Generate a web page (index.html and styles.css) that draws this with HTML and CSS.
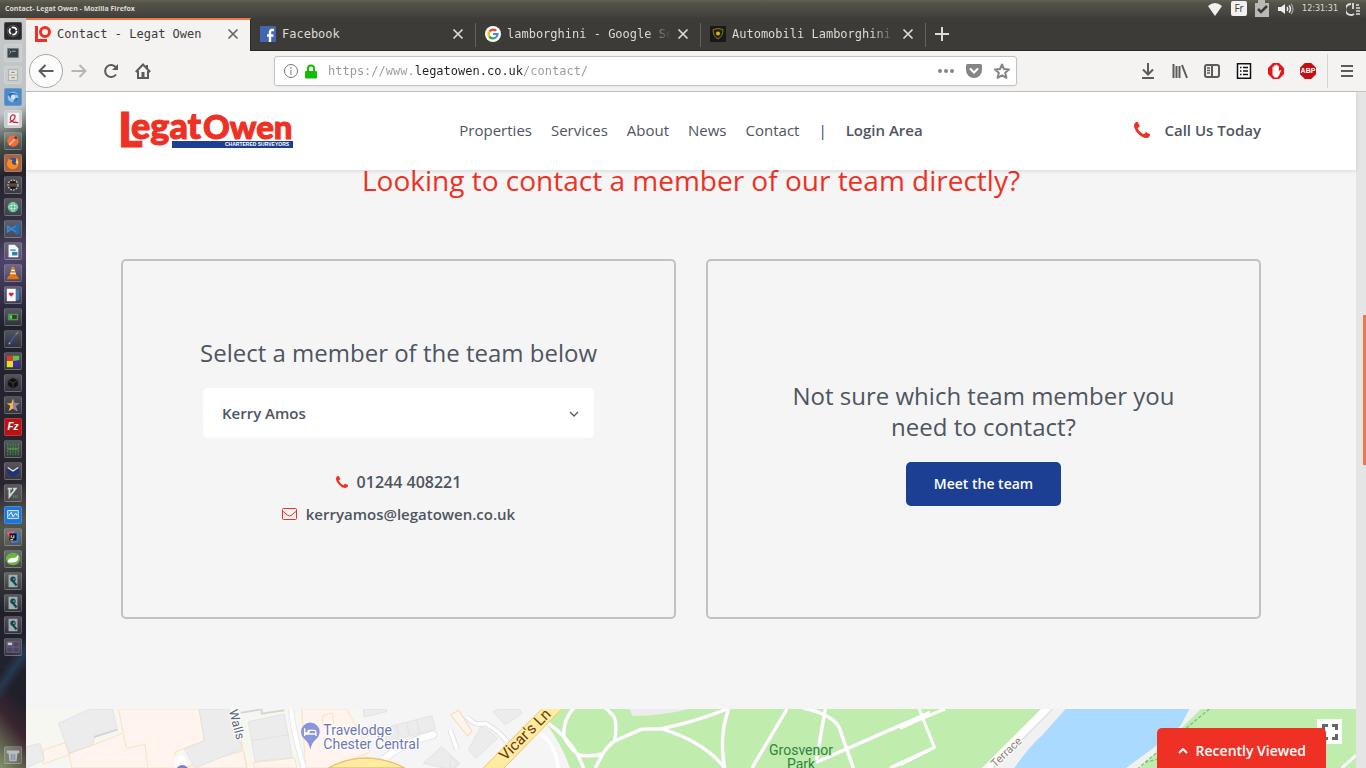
FILE: index.html
```html
<!DOCTYPE html>
<html lang="en">
<head>
<meta charset="utf-8">
<title>Contact - Legat Owen</title>
<link rel="stylesheet" href="styles.css">
</head>
<body>
<svg width="0" height="0" class="defs" aria-hidden="true">
  <symbol id="phone" viewBox="0 128 1408 1408"><path d="M1408 1240q0 27-10 70.500t-21 68.500q-21 50-122 106-94 51-186 51-27 0-53-3.500t-57-12.500-47-14.500-55.500-20.500-49-18q-98-35-175-83-127-79-264-216t-216-264q-48-77-83-175-3-9-18-49t-20.500-55.500-14.500-47-12.500-57-3.500-53q0-92 51-186 56-101 106-122 25-11 68.500-21t70.500-10q14 0 21 3 18 6 53 76 11 19 30 54t35 63.500 31 53.500q3 4 17.500 25t21.500 35.500 7 28.500q0 20-28.500 50t-62 55-62 53-28.500 46q0 9 5 22.500t8.500 20.500 14 24 11.500 19q76 137 174 235t235 174q2 1 19 11.500t24 14 20.500 8.500 22.500 5q18 0 46-28.500t53-62 55-62 50-28.500q14 0 28.500 7t35.500 21.500 25 17.500q25 15 53.500 31t63.500 35 54 30q70 35 76 53 3 7 3 21z"/></symbol>
  <symbol id="close" viewBox="0 0 12 12"><path d="M1.500 1.500l9 9M10.500 1.500l-9 9" fill="none" stroke="currentColor" stroke-width="1.700"/></symbol>
  <symbol id="ssh" viewBox="0 0 18 18"><path fill="#9fb0b2" d="M4 2h10v14H4z"/><circle cx="9" cy="7" r="3" fill="#17464f"/><path d="M9 9l4 5" stroke="#17464f" stroke-width="2.500"/><circle cx="10" cy="7" r="1" fill="#6aa0a8"/></symbol>
</svg>

<div class="titlebar">
  <span class="window-title">Contact- Legat Owen - Mozilla Firefox</span>
  <div class="indicators">
    <svg width="16" height="16" viewBox="0 0 16 16"><path fill="#f1f0ee" d="M1 5Q8-1 15 5L8 15z"/></svg>
    <span class="keyboard">Fr</span>
    <svg width="14" height="17" viewBox="0 0 14 17"><path fill="#b9b8b4" d="M0 3h3V0h7v3h4v14H0z"/><path d="M3 9l3 3 6-6" fill="none" stroke="#3c3b37" stroke-width="2.500"/></svg>
    <svg width="17" height="14" viewBox="0 0 17 14"><path fill="#eee" d="M1 5h3l4-3v10L4 9H1z"/><path d="M10 5q1.500 2 0 4M12 3.500q3 3.500 0 7" fill="none" stroke="#eee" stroke-width="1.500"/><path d="M14 2q4 5 0 10" fill="none" stroke="#98978f" stroke-width="1.500"/></svg>
    <span class="clock">12:31:31</span>
    <svg width="15" height="14" viewBox="0 0 15 14"><path d="M5 2a5.500 5.500 0 1 0 3 10M7 1v6" fill="none" stroke="#ddd" stroke-width="1.800"/><path d="M10 3h3M10 6h4M10 9h4M10 12h4" stroke="#ddd" stroke-width="1.500"/></svg>
  </div>
</div>

<div class="desktop">
<nav class="launcher" aria-label="Applications">
  <button aria-label="Dash" class="dark"><svg viewBox="0 0 18 18"><circle cx="9" cy="9" r="4" fill="none" stroke="#fff" stroke-width="2" stroke-dasharray="7 1.380"/><circle cx="9" cy="9" r="6.500" fill="none" stroke="#777" stroke-width=".6"/></svg></button>
  <button aria-label="Terminal" class="light"><svg viewBox="0 0 18 18"><path fill="#354142" stroke="#778" d="M3 4h12v10H3z"/><path d="M5 6l2 2-2 2M8 7h4" stroke="#dde" fill="none" stroke-width=".8"/></svg></button>
  <button aria-label="Files" class="light"><svg viewBox="0 0 18 18"><path fill="#e4e3dc" stroke="#aaa9a2" d="M4 3h10v12H4zM4 9h10"/><path d="M7 6h4M7 12h4" stroke="#777"/></svg></button>
  <button aria-label="Chromium" class="blue"><svg viewBox="0 0 18 18"><circle cx="9" cy="9" r="6" fill="#9cc5e8"/><path fill="#2e6fae" d="M3 6q5-4 12 1l-6-1-2 5zM9 15l3-5 3 0q-1 4-6 5z"/><circle cx="9" cy="9" r="2.500" fill="#cfe4f5"/></svg></button>
  <button aria-label="PDF viewer" class="light"><svg viewBox="0 0 18 18"><path fill="#f7f7f7" d="M3 2h13v14H3z"/><path d="M5 13q8-4 6-8-4-2-5 3t9 5" stroke="#cf2639" fill="none" stroke-width="1.500"/></svg></button>
  <button aria-label="Postman"><svg viewBox="0 0 18 18"><circle cx="9" cy="9" r="6.500" fill="#f26b3a"/><path d="M5 13l7-7" stroke="#fff" stroke-width="1.200"/><circle cx="12" cy="5.500" r="1.500" fill="#5b3124"/></svg></button>
  <button aria-label="Firefox" class="orange"><svg viewBox="0 0 18 18"><circle cx="9" cy="9" r="6" fill="#2b4fa2"/><path fill="#ff8a1c" d="M4 4q2 2 5 1-3 4 1 6 4 1 5-5 2 8-5 10-7 0-8-6z"/><path fill="#ffd13b" d="M13 3q3 4 1 8l-2-2z"/></svg></button>
  <button aria-label="Eclipse"><svg viewBox="0 0 18 18"><circle cx="9" cy="9" r="5.500" fill="#1b1a1e" stroke="#c8c4bd" stroke-width="1.500" stroke-dasharray="2 1.200"/><path d="M4 8h10M4 10h10" stroke="#9b7146"/></svg></button>
  <button aria-label="Atom"><svg viewBox="0 0 18 18"><circle cx="9" cy="9" r="6" fill="#56b98c"/><ellipse cx="9" cy="9" rx="5" ry="2" fill="none" stroke="#d7f2e4" stroke-width=".8"/><ellipse cx="9" cy="9" rx="2" ry="5" fill="none" stroke="#d7f2e4" stroke-width=".8"/></svg></button>
  <button aria-label="Code"><svg viewBox="0 0 18 18"><path d="M3 6l10 7V5L3 12z" fill="none" stroke="#2f8bd3" stroke-width="2"/><path fill="#1d6fb5" d="M12 2l4 2v10l-4 2z"/></svg></button>
  <button aria-label="Writer"><svg viewBox="0 0 18 18"><path fill="#f2f7fa" d="M4 2h7l4 4v10H4z"/><path d="M6 8h6" stroke="#3987b0" stroke-width="1.500"/><path fill="#2f7ea8" d="M8 10h6v4H8z"/></svg></button>
  <button aria-label="VLC"><svg viewBox="0 0 18 18"><path fill="#f0861d" d="M8 2h2l3 10H5z"/><path d="M7 6h4M6 9.500h6" stroke="#fff" stroke-width="1.500"/><path fill="#e6720d" d="M4 12h10l2 4H2z"/></svg></button>
  <button aria-label="Solitaire"><svg viewBox="0 0 18 18"><path fill="#4478ae" d="M11 3h5v12h-5z"/><path fill="#fff" d="M2 2h10v14H2z"/><path fill="#e2232d" d="M7 11L4 8q1-3 3-1 2-2 3 1z"/></svg></button>
  <button aria-label="Monitor"><svg viewBox="0 0 18 18"><path fill="#28452a" stroke="#4d9a48" stroke-width="1.500" d="M4 6h10v6H4z"/><path fill="#71c965" d="M5 7h3v4H5z"/></svg></button>
  <button aria-label="Paint"><svg viewBox="0 0 18 18"><path d="M5 14l7-10" stroke="#3762b5" stroke-width="1.500"/><path d="M12 4l3-3" stroke="#8b7568" stroke-width="2"/><circle cx="5" cy="14" r="1" fill="#5fd0ee"/></svg></button>
  <button aria-label="Blocks"><svg viewBox="0 0 18 18"><path fill="#dc3a2f" d="M2 3h7v6H2z"/><path fill="#61c542" d="M9 3h7v5l-7 1z"/><path fill="#e5df2c" d="M2 9h7v7H2z"/><path fill="#4126b4" d="M9 9h7v6H9z"/></svg></button>
  <button aria-label="Cube"><svg viewBox="0 0 18 18"><path fill="#111" stroke="#3d403d" d="M9 3l6 3v6l-6 4-6-4V6z"/><path d="M3 6l6 3 6-3M9 9v7" stroke="#444" fill="none"/></svg></button>
  <button aria-label="Star"><svg viewBox="0 0 18 18"><path fill="#f3bd35" d="M9 2l2 5h5l-4 3 2 6-5-3-5 3 2-6-4-3h5z"/><path fill="#9579b8" d="M9 2l2 5h5l-4 3 2 6-5-3z"/></svg></button>
  <button aria-label="FileZilla" class="red"><span>Fz</span></button>
  <button aria-label="Matrix"><svg viewBox="0 0 18 18"><path d="M3 2v14M6 3v13M9 2v14M12 3v13M15 2v14" stroke="#348b3c" stroke-width="1.500" stroke-dasharray="3 1"/><path d="M3 9h12" stroke="#76a961"/></svg></button>
  <button aria-label="Book"><svg viewBox="0 0 18 18"><path fill="#1b347a" d="M2 5l7 4 7-4v6l-7 5-7-5z"/><path d="M3 5l6 4 6-4" stroke="#e9e9e9" stroke-width="1.500" fill="none"/></svg></button>
  <button aria-label="Vim"><svg viewBox="0 0 18 18"><path d="M3 4h5M5 4v9l7-9h-3" stroke="#d0d8d3" stroke-width="2" fill="none"/><path d="M9 13h6" stroke="#4d9b6a" stroke-width="3" stroke-dasharray="1 1"/></svg></button>
  <button aria-label="System monitor" class="azure"><svg viewBox="0 0 18 18"><path fill="#3b91ea" stroke="#e9f4ff" d="M3 4h12v9H3z"/><path d="M4 10l3-4 2 5 3-4 2 3" stroke="#fff" fill="none"/></svg></button>
  <button aria-label="IntelliJ"><svg viewBox="0 0 18 18"><path fill="#f0568a" d="M2 4l8-2 5 8-7 6z"/><path fill="#2f7fe6" d="M10 3l6 3-1 9-7 1z"/><path fill="#151515" d="M5 5h8v8H5z"/><path d="M7 7v3M10 7v3H8M6 12h3" stroke="#fff" fill="none"/></svg></button>
  <button aria-label="Spring"><svg viewBox="0 0 18 18"><ellipse cx="9" cy="9" rx="8" ry="7" fill="#6db33f"/><path fill="#fff" d="M3 13q0-5 6-5 4 0 6-4 1 9-6 9z"/></svg></button>
  <button aria-label="Remote host 1"><svg><use href="#ssh"/></svg></button>
  <button aria-label="Remote host 2"><svg><use href="#ssh"/></svg></button>
  <button aria-label="Remote host 3"><svg><use href="#ssh"/></svg></button>
  <button aria-label="Workspaces"><svg viewBox="0 0 18 18"><path fill="#4d4662" stroke="#817b91" stroke-width=".6" d="M2 3h14v12H2zM9 3v12M2 9h14"/><path fill="#d6c8cf" d="M3 4h5v3H3z"/></svg></button>
  <button aria-label="Trash" class="trash"><svg viewBox="0 0 18 18"><path fill="#b7bfc6" d="M2 4h14v3H2zM4 7h10l-1 9H5z"/><path d="M7 8v7M9 8v7M11 8v7" stroke="#7b858e"/></svg></button>
</nav>

<div class="browser">
  <div class="tabs" role="tablist">
    <div class="tab active" role="tab" aria-selected="true">
      <svg width="16" height="16" viewBox="0 0 16 16"><path d="M1.500 0v14.500H12" fill="none" stroke="#ee3124" stroke-width="3"/><circle cx="10" cy="6" r="4.500" fill="none" stroke="#ee3124" stroke-width="3"/></svg>
      <span class="tab-title">Contact - Legat Owen</span>
      <button aria-label="Close tab"><svg width="12" height="12"><use href="#close"/></svg></button>
    </div>
    <div class="tab" role="tab">
      <svg width="16" height="16" viewBox="0 0 16 16"><rect width="16" height="16" rx="1" fill="#4267b2"/><path d="M10 16V6q0-2 2-2h2M7 9.500h6.500" fill="none" stroke="#fff" stroke-width="2.400"/></svg>
      <span class="tab-title">Facebook</span>
      <button aria-label="Close tab"><svg width="12" height="12"><use href="#close"/></svg></button>
    </div>
    <div class="tab" role="tab">
      <svg width="16" height="16" viewBox="0 0 16 16"><circle cx="8" cy="8" r="8" fill="#fff"/><g fill="none" stroke-width="2.200"><path stroke="#ea4335" d="M4.500 5.500A4.500 4.500 0 0 1 11.200 4.700"/><path stroke="#fbbc05" d="M4.300 10.500a4.500 4.500 0 0 1 .2-5"/><path stroke="#34a853" d="M11 11.300a4.500 4.500 0 0 1-6.700-.8"/><path stroke="#4285f4" d="M8 8h4.500a4.500 4.500 0 0 1-1.500 3.300"/></g></svg>
      <span class="tab-title faded">lamborghini - Google Sea</span>
      <button aria-label="Close tab"><svg width="12" height="12"><use href="#close"/></svg></button>
    </div>
    <div class="tab" role="tab">
      <svg width="16" height="16" viewBox="0 0 16 16"><path fill="#191919" d="M0 0h16v16H0z"/><path fill="#26220e" stroke="#8b7420" d="M3 3.500q5-2 10 0 0 7-5 9.500-5-2.500-5-9.500z"/><circle cx="8" cy="7.500" r="2" fill="#e0ae1c"/></svg>
      <span class="tab-title faded">Automobili Lamborghini -</span>
      <button aria-label="Close tab"><svg width="12" height="12"><use href="#close"/></svg></button>
    </div>
    <button class="new-tab" aria-label="New tab"><svg width="14" height="14" viewBox="0 0 14 14"><path d="M7 0v14M0 7h14" stroke="currentColor" stroke-width="2"/></svg></button>
  </div>

  <div class="toolbar">
    <button class="back" aria-label="Back"><svg width="16" height="16" viewBox="0 0 16 16"><path d="M15.500 8H1.500M7.500 2l-6 6 6 6"/></svg></button>
    <button class="tool disabled" aria-label="Forward"><svg width="16" height="16" viewBox="0 0 16 16"><path d="M.5 8h14M8.500 2l6 6-6 6"/></svg></button>
    <button class="tool" aria-label="Reload"><svg width="16" height="16" viewBox="0 0 16 16"><path d="M13 11.500a6 6 0 1 1 0-7"/><path d="M15 1v6H9z" class="solid"/></svg></button>
    <button class="tool" aria-label="Home"><svg width="16" height="16" viewBox="0 0 16 16"><path d="M.8 9L8 1.500 15.200 9M3 8v7h10V8M12 5V2"/><path d="M6.500 9h3v6h-3z" class="solid"/></svg></button>
    <div class="urlbar">
      <svg width="16" height="16" viewBox="0 0 16 16" class="info"><circle cx="8" cy="8" r="6.500"/><path d="M8 7v5M8 4v2"/></svg>
      <svg width="14" height="15" viewBox="0 0 14 15"><path d="M4 7V4.500a3 3 0 0 1 6 0V7" fill="none" stroke="#12bc00" stroke-width="2"/><rect x="1" y="7" width="12" height="7.500" rx="1" fill="#12bc00"/></svg>
      <input type="text" aria-label="Address" value="https://www.legatowen.co.uk/contact/">
      <button aria-label="Page actions"><svg width="16" height="16" viewBox="0 0 16 16" class="grey"><circle cx="2" cy="8" r="2"/><circle cx="8" cy="8" r="2"/><circle cx="14" cy="8" r="2"/></svg></button>
      <button aria-label="Save to Pocket"><svg width="16" height="16" viewBox="0 0 16 16" class="grey"><path d="M1.500 1h13Q16 1 16 2.500V7A8 8 0 0 1 0 7V2.500Q0 1 1.500 1z"/><path d="M4.500 6L8 9.500 11.500 6" fill="none" stroke="#fff" stroke-width="2" stroke-linecap="round"/></svg></button>
      <button aria-label="Bookmark"><svg width="16" height="16" viewBox="0 0 16 16"><path d="M8 1.500l2 4.500 5 .5-3.800 3.300 1.200 5L8 12.300l-4.400 2.500 1.200-5L1 6.500 6 6z" fill="none" stroke="#858585" stroke-width="1.700" stroke-linejoin="round"/></svg></button>
    </div>
    <button class="tool" aria-label="Downloads"><svg width="16" height="16" viewBox="0 0 16 16"><path d="M8 0v11M3 6.500l5 5 5-5M2 15h12"/></svg></button>
    <button class="tool" aria-label="Library"><svg width="16" height="16" viewBox="0 0 16 16"><path d="M1.500 1v14M4.500 3v12M7.500 3v12M10 2l5 13"/></svg></button>
    <button class="tool" aria-label="Sidebars"><svg width="16" height="16" viewBox="0 0 16 16"><rect x="1" y="2" width="14" height="12" rx="2"/><path d="M8 2v12"/><path class="thin" d="M3 5h3M3 7.500h3M3 10h3"/></svg></button>
    <button class="tool" aria-label="Reading list"><svg width="16" height="16" viewBox="0 0 16 16" class="black"><path class="thin" d="M1.500.8h13v14.400h-13z" fill="#fff"/><path class="thin" d="M4 4.500h1.500M7 4.500h5M4 8h1.500M7 8h5M4 11.500h1.500M7 11.500h5"/></svg></button>
    <button class="tool" aria-label="Ad blocker"><svg width="16" height="16" viewBox="0 0 16 16"><path class="plain" fill="#e8141b" d="M5 0h6l5 5v6l-5 5H5l-5-5V5z"/><path class="plain" fill="#fff" d="M4.500 4q.8-.8 1.500 0V2.800q.8-1 1.600 0V2q.8-1 1.600 0v1q.8-1 1.600 0v5.500l1.200-1.500q1.200-.3 1 .8L11 12.500 9.500 14.500H6.500L4.500 12z"/></svg></button>
    <button class="tool" aria-label="Adblock Plus"><span class="abp">ABP</span></button>
    <button class="menu" aria-label="Open menu"><svg width="12" height="12" viewBox="0 0 12 12"><path d="M0 1h12M0 6h12M0 11h12"/></svg></button>
  </div>

  <div class="viewport">
    <div class="page">
      <header class="site-header">
        <a href="#" class="logo" aria-label="Legat Owen">
          <svg width="174" height="38" viewBox="0 0 174 38">
            <path fill="#1c3f94" d="M51 30h121v7H51z"/>
            <g class="word"><text x="-3" y="36" font-size="47">L</text><text x="10" y="28" font-size="36">egat</text><text x="82" y="28" font-size="33">Owen</text></g>
            <text class="strap" x="104" y="35">CHARTERED SURVEYORS</text>
          </svg>
        </a>
        <nav class="site-nav">
          <a href="#">Properties</a><a href="#">Services</a><a href="#">About</a><a href="#">News</a><a href="#">Contact</a><span class="bar">|</span><a href="#" class="strong">Login Area</a>
        </nav>
        <a href="#" class="call"><svg width="16" height="16"><use href="#phone"/></svg>Call Us Today</a>
      </header>
      <main>
        <h1>Looking to contact a member of our team directly?</h1>
        <div class="cards">
          <section class="card">
            <h2><label for="member">Select a member of the team below</label></h2>
            <div class="select">
              <select id="member"><option>Kerry Amos</option></select>
              <svg width="10" height="6" viewBox="0 0 10 6"><path d="M1 1l4 4 4-4" fill="none" stroke="#555b66" stroke-width="1.300"/></svg>
            </div>
            <a href="#" class="contact number"><svg width="12" height="12"><use href="#phone"/></svg>01244 408221</a>
            <a href="#" class="contact"><svg width="15" height="12" viewBox="0 0 15 12"><path d="M1.500.5h12q1 0 1 1v9q0 1-1 1h-12q-1 0-1-1v-9q0-1 1-1zM.5 3l5.500 4.500q1.500 1 3 0L14.500 3" fill="none" stroke="#ee3124"/></svg>kerryamos@legatowen.co.uk</a>
          </section>
          <section class="card unsure">
            <h2>Not sure which team member you need to contact?</h2>
            <button class="primary">Meet the team</button>
          </section>
        </div>
      </main>
      <div class="map">
        <svg viewBox="0 0 3990 177" preserveAspectRatio="xMidYMin slice" role="img" aria-label="Map of Chester">
          <path fill="#f5f5f5" d="M0 0h3990v177H0z"/>
          <g transform="translate(-78 -27)">
            <path fill="#f7f7f1" d="M78 27h1120v177H78z"/>
            <path fill="#f5f5f5" d="M1080 27h400v177H1110z"/>
            <path fill="#fff5ee" stroke="#fde0c0" stroke-width="3" d="M355 27h242l16 95-90 35 25 47H215l-8-43 75-27 88-35zM130 150l66-22 12 36-78 28zM550 204l180-52 12 52zM762 188l122-14 6 30H762zM905 27h135l70 130-118 47h-75z"/>
            <path fill="#ececec" stroke="#ddd" stroke-width="2" d="M175 70l95-43h68l14 62-68 22-6 24-70 24zM78 140l43-10 12 50-55 24zM597 27h90l40 120-142 57-32-57 60-25zM745 65l108-23 24 130-112 13zM1090 27h70v8l-68 16zM1160 82l135-35 12 40-150 42zM1270 190l55-50 55 50-20 20z"/>
            <path stroke="#d5d5d5" stroke-width="6" fill="none" d="M282 111l70-22M722 38l63-10v13l68-10"/>
            <path stroke="#ddd" stroke-width="2" fill="none" d="M755 122l112-18M1190 75l8 43M1220 67l8 43M1250 59l8 43"/>
            <path stroke="#fde0c0" stroke-width="3" fill="none" d="M370 105l10 40 55-12 8 71M968 48l28-10 6 30-35 10zM720 100l20 104"/>
            <path stroke="#e5e5e5" stroke-width="18" fill="none" d="M872 27q15 100 40 177"/><path stroke="#fff" stroke-width="13" fill="none" d="M872 27q15 100 40 177"/>
            <path stroke="#ddd" stroke-width="24" fill="none" stroke-linecap="round" d="M1150 180q50-50 150-76"/><path stroke="#fff" stroke-width="20" fill="none" stroke-linecap="round" d="M1150 180q50-50 150-76"/>
            <path stroke="#fff" stroke-width="16" fill="none" d="M532 204v-25q10-15 20 5v20"/>
            <path fill="#ffeba1" stroke="#eebf71" stroke-width="4" d="M985 204q110-60 230 0z"/>
            <circle cx="547" cy="215" r="20" fill="#7780d4"/>
            <path fill="#8b95dc" d="M931 149q-4-22-18-32a28 28 0 1 1 36 0q-14 10-18 32z"/>
            <path d="M914 85v23M914 102h34v6M924 91v8h-8M927 99v-8h17q4 0 4 11" stroke="#fff" stroke-width="4" fill="none"/>
            <text class="place" x="970" y="105">Travelodge</text><text class="place" x="970" y="147">Chester Central</text>
            <text class="street" transform="translate(686 32) rotate(75)">Walls</text>
          </g>
          <g transform="translate(1272 -27)">
            <path fill="#ececec" stroke="#ddd" stroke-width="2" d="M128 35l20-8h60l8 14-50 33zM55 150l40-75 48 40-65 60zM0 204v-35l24 20-14 15z"/>
            <path fill="#fff5ee" stroke="#fdd3a0" stroke-width="3" d="M2 45l24-15 40 65-14 12z"/>
            <path stroke="#ddd" stroke-width="16" fill="none" d="M50 50q25 30 55 20 40 20 70 60M0 90l22 60"/><path stroke="#fff" stroke-width="11" fill="none" d="M50 50q25 30 55 20 40 20 70 60M0 90l22 60"/>
            <path fill="#c0ecad" d="M330 27h1110v177H360q-20-60-68-130z"/>
            <path fill="#ececec" d="M538 27h180q-80 20-170 21z"/>
            <path stroke="#fff" stroke-width="10" fill="none" d="M255 90q60 30 70 114"/>
            <path stroke="#e5e8e0" stroke-width="12" fill="none" d="M295 70q50 35 88 94l18 40M383 164q35 8 75-2 15-24 36-39M494 123q10-65-8-80l-20-20M494 123l80-35 60-2q100-20 200-60M634 86q130 40 190 118M436 204l22-42M383 164q-40-40-42-60 0-50 32-81M836 27q-30 80-12 177M906 204l105-177M1060 24q90 20 108 60l42 120M1126 27l-28 160M1098 187l342-150M1320 204l120-55"/>
            <path stroke="#fff" stroke-width="9" fill="none" d="M295 70q50 35 88 94l18 40M383 164q35 8 75-2 15-24 36-39M494 123q10-65-8-80l-20-20M494 123l80-35 60-2q100-20 200-60M634 86q130 40 190 118M436 204l22-42M383 164q-40-40-42-60 0-50 32-81M836 27q-30 80-12 177M906 204l105-177M1060 24q90 20 108 60l42 120M1126 27l-28 160M1098 187l342-150M1320 204l120-55"/>
            <path fill="#ffeba1" stroke="#f0c56e" stroke-width="3" d="M278 24L96 208h62L338 24z"/>
            <text class="road" transform="translate(166 184) rotate(-45)">Vicar's Ln</text>
            <text class="park" x="1053" y="165">Grosvenor</text><text class="park" x="1053" y="207">Park</text>
          </g>
          <g transform="translate(2622 -27)">
            <path fill="#c0ecad" d="M90 27h1278v177H90z"/>
            <path fill="#f1f1f1" d="M425 27h72L345 204h-95zM868 27h35L720 204h-42z"/>
            <path fill="#aadaff" d="M497 27h371l-26 50L765 140l-87 64H343q40-60 85-100z"/>
            <path stroke="#e3e3e3" stroke-width="28" d="M455 14L245 224"/><path stroke="#fff" stroke-width="22" d="M452 14L242 224"/>
            <path stroke="#fff" stroke-width="9" fill="none" d="M58 27l8 22 37 93L0 195M0 85l66-30 69-28M1325 204l43-38"/>
            <path stroke="#72c487" stroke-width="4" stroke-dasharray="10 6" fill="none" d="M928 27L715 204M735 187l60-15"/>
            <text class="terrace" transform="translate(286 204) rotate(-44)">Terrace</text>
          </g>
        </svg>
        <button class="fullscreen" aria-label="Full screen"><svg width="16" height="16" viewBox="0 0 16 16"><path d="M1.500 6V1.500H6M10 1.500h4.500V6M14.500 10v4.500H10M6 14.500H1.500V10" fill="none" stroke="#666" stroke-width="3"/></svg></button>
      </div>
      <button class="recent"><svg width="10" height="6" viewBox="0 0 10 6"><path d="M1 5l4-4 4 4" fill="none" stroke="#fff" stroke-width="2"/></svg>Recently Viewed</button>
    </div>
    <div class="scrollbar"><div class="thumb"></div></div>
  </div>
</div>
</div>
</body>
</html>
```
FILE: styles.css
```css
* { box-sizing: border-box; }
body {
  margin: 0;
  height: 100vh;
  overflow: hidden;
  display: flex;
  flex-direction: column;
  font: 15px/20px "Open Sans", "Noto Sans", sans-serif;
  color: #4e5561;
}
button { border: 0; padding: 0; margin: 0; background: none; font: inherit; color: inherit; }
a { color: inherit; text-decoration: none; }
svg { display: block; flex: none; }
.defs { position: absolute; }

/* Desktop panel */
.titlebar {
  height: 18px;
  flex: none;
  display: flex;
  align-items: center;
  justify-content: space-between;
  padding: 0 5px 1px;
  background: linear-gradient(#625f52, #54524a 20%, #403f3a);
  color: #dfdbd2;
}
.window-title { font: bold 7px/16px "Open Sans", sans-serif; }
.indicators { display: flex; align-items: center; gap: 8px; }
.keyboard {
  width: 16px;
  height: 15px;
  border-radius: 2px;
  background: #f1f0ee;
  color: #3c3b37;
  font: 10px/15px "Open Sans", sans-serif;
  text-align: center;
}
.clock { font: 8px/16px "DejaVu Sans", sans-serif; }

.desktop { flex: 1; min-height: 0; display: flex; }
.launcher {
  width: 26px;
  flex: none;
  display: flex;
  flex-direction: column;
  align-items: center;
  gap: 4px;
  padding: 4px 0;
  background:
    linear-gradient(125deg, transparent 60%, #25394f 70%, transparent 80%) 0 560px / 26px 120px no-repeat,
    linear-gradient(50deg, #81936c, #3a2530 45%, #20202a 70%) 0 650px / 26px 100px no-repeat,
    linear-gradient(160deg, #c6c8ca 0, #bfc3c5 90px, #444e47 120px, #24222d 150px, #353242 200px, #4e4269 230px, #20212e 290px, #29252f 440px, #53564e 480px, #201f2a 560px, #262a38 100%);
}
.launcher button {
  width: 18px;
  height: 18px;
  flex: none;
  border-radius: 2px;
  border: 1px solid #ffffff28;
  background: linear-gradient(#ffffff38, #ffffff14);
}
.launcher svg { width: 16px; height: 16px; }
.launcher .dark { background: #29282b; }
.launcher .light { background: #c9cccc; }
.launcher .blue { background: #4b8ac6; }
.launcher .azure { background: #2173d6; }
.launcher .orange { background: #a3644a; }
.launcher .red { background: #b61316; color: #fff; font: italic bold 10px/16px "Liberation Sans", sans-serif; }
.launcher .trash { margin-top: auto; }

/* Browser chrome */
.browser { flex: 1; min-width: 0; display: flex; flex-direction: column; }
.tabs {
  height: 33px;
  flex: none;
  display: flex;
  background: #3c3b37;
  border-bottom: 1px solid #292824;
  color: #dfdbd2;
}
.tab {
  flex: 0 1 225px;
  min-width: 0;
  display: flex;
  align-items: center;
  gap: 6px;
  padding: 0 12px 0 9px;
  background: linear-gradient(#65635d, #65635d) right 5px / 1px 24px no-repeat;
}
.tab.active {
  height: 33px;
  padding: 0 11px 3px 9px;
  background: #f4f3f1;
  border-top: 2px solid #f07746;
  border-right: 1px solid #292824;
  color: #3c3b37;
}
.tab-title {
  flex: 1;
  min-width: 0;
  overflow: hidden;
  white-space: nowrap;
  font: 12px/20px "DejaVu Sans Mono", monospace;
}
.faded { mask-image: linear-gradient(90deg, #000 85%, transparent); }
.tab.active button { color: #666; }
.new-tab { width: 32px; display: grid; place-items: center; }
.toolbar {
  height: 41px;
  flex: none;
  display: flex;
  align-items: center;
  padding-left: 3px;
  background: #f4f3f1;
  border-bottom: 1px solid #c3c2c0;
}
.toolbar path, .toolbar rect, .toolbar circle { stroke-width: 2; }
.toolbar .thin { stroke-width: 1.5; }
.toolbar .plain { stroke: none; }
.tool, .back, .menu { display: grid; place-items: center; flex: none; height: 32px; width: 32px; }
.tool > svg, .back > svg, .menu > svg { fill: none; stroke: #5c5b59; }
.tool .solid { fill: #5c5b59; stroke: none; }
.tool > .black { stroke: #111; }
.disabled { opacity: .4; }
.back { width: 34px; height: 34px; border: 1px solid #a9a8a6; border-radius: 50%; background: #fcfcfc; }
.menu { width: 39px; height: 34px; margin-left: 3px; border-left: 1px solid #d5d4d2; }
.abp {
  width: 16px;
  height: 16px;
  background: #c70d12;
  clip-path: polygon(30% 0, 70% 0, 100% 30%, 100% 70%, 70% 100%, 30% 100%, 0 70%, 0 30%);
  color: #fff;
  font: bold 7px/16px "Liberation Sans", sans-serif;
  text-align: center;
}
.urlbar {
  flex: 1;
  height: 30px;
  margin: 0 115px;
  padding: 0 6px 0 8px;
  display: flex;
  align-items: center;
  gap: 5px;
  background: #fff;
  border: 1px solid #c3c2c0;
  border-radius: 3px;
  box-shadow: 0 1px 3px #0000000d;
}
.urlbar button { margin-left: 7px; }
.info { fill: none; stroke: #777; }
.urlbar .info * { stroke-width: 1; }
.grey { fill: #858585; }
.urlbar input {
  flex: 1;
  min-width: 0;
  margin-left: 5px;
  padding: 0;
  border: 0;
  outline: 0;
  font: 12px/20px "DejaVu Sans Mono", monospace;
  color: transparent;
  background: linear-gradient(90deg, #999 12ch, #222 12ch, #222 27ch, #999 27ch);
  background-clip: text;
  -webkit-background-clip: text;
}

/* Web page */
.viewport { flex: 1; min-height: 0; display: flex; }
.page {
  position: relative;
  flex: 1;
  min-width: 0;
  display: flex;
  flex-direction: column;
  background: #f5f5f5;
}
.scrollbar { width: 10px; background: #e5e5e5; padding: 223px 0 0 7px; }
.thumb { height: 150px; background: #f07746; }
.site-header {
  z-index: 1;
  height: 78px;
  flex: none;
  display: grid;
  grid-template-columns: 1fr auto 1fr;
  align-items: center;
  padding: 0 95px 2px;
  background: #fff;
  box-shadow: 0 1px 4px #0000001f;
}
.logo svg { overflow: visible; }
.word { font-family: Lato, sans-serif; font-weight: 900; fill: #ee3124; stroke: #ee3124; stroke-width: 1px; }
.strap { font: bold 5px "Liberation Sans", sans-serif; fill: #fff; }
.site-nav { display: flex; gap: 19px; }
.bar { color: #1c3f94; }
.strong, .call { font-weight: 600; }
.call { justify-self: end; display: flex; align-items: center; gap: 14px; }
.call svg, .contact svg { fill: #ee3124; }
main { flex: none; padding: 0 95px 90px; }
h1 {
  margin: 0 0 69px;
  font-size: 28px;
  line-height: 20px;
  font-weight: 400;
  text-align: center;
  color: #ee3124;
}
.cards { display: grid; grid-template-columns: repeat(2, minmax(0, 1fr)); gap: 30px; }
.card {
  display: flex;
  flex-direction: column;
  align-items: center;
  padding: 76px 80px 87px;
  border: 2px solid #c1c1c1;
  border-radius: 5px;
}
.unsure { justify-content: center; padding: 8px 80px 0; }
h2 { margin: 0 0 20px; font-size: 24px; line-height: 31px; font-weight: 400; text-align: center; }
h2 label { white-space: nowrap; }
.select { position: relative; align-self: stretch; margin-bottom: 28px; }
select {
  appearance: none;
  display: block;
  width: 100%;
  height: 50px;
  padding: 0 19px;
  border: 0;
  border-radius: 5px;
  background: #fff;
  font: 600 15px/20px "Open Sans", sans-serif;
  color: inherit;
}
.select svg { position: absolute; right: 15px; top: 23px; pointer-events: none; }
.contact { display: flex; align-items: center; gap: 9px; font-weight: 600; line-height: 32px; }
.number { font-size: 16px; }
.primary {
  height: 44px;
  padding: 0 28px;
  border-radius: 5px;
  background: #1c3f94;
  color: #fff;
  font-size: 14px;
  font-weight: 600;
}
.map { position: relative; flex: 1; min-height: 0; overflow: hidden; }
.map > svg { width: 100%; height: 100%; }
.map text { font-family: Roboto, sans-serif; paint-order: stroke; stroke: #fff; stroke-width: 6px; }
.place { font-size: 42px; fill: #6d76b5; }
.street { font-size: 38px; fill: #5b6670; }
.map .road { font-size: 46px; fill: #6b3b10; stroke: #ffeba1; }
.map .park { font-size: 42px; fill: #2f8442; text-anchor: middle; stroke: #c0ecad; }
.terrace { font-size: 34px; fill: #8d8676; }
.fullscreen {
  position: absolute;
  top: 10px;
  right: 14px;
  width: 25px;
  height: 25px;
  display: grid;
  place-items: center;
  background: #fff;
}
.recent {
  position: absolute;
  right: 30px;
  bottom: 0;
  height: 40px;
  padding: 5px 20px 0 21px;
  display: flex;
  align-items: center;
  gap: 8px;
  border-radius: 5px 5px 0 0;
  background: #ee3124;
  color: #fff;
  font-size: 14px;
  font-weight: 600;
}
```
